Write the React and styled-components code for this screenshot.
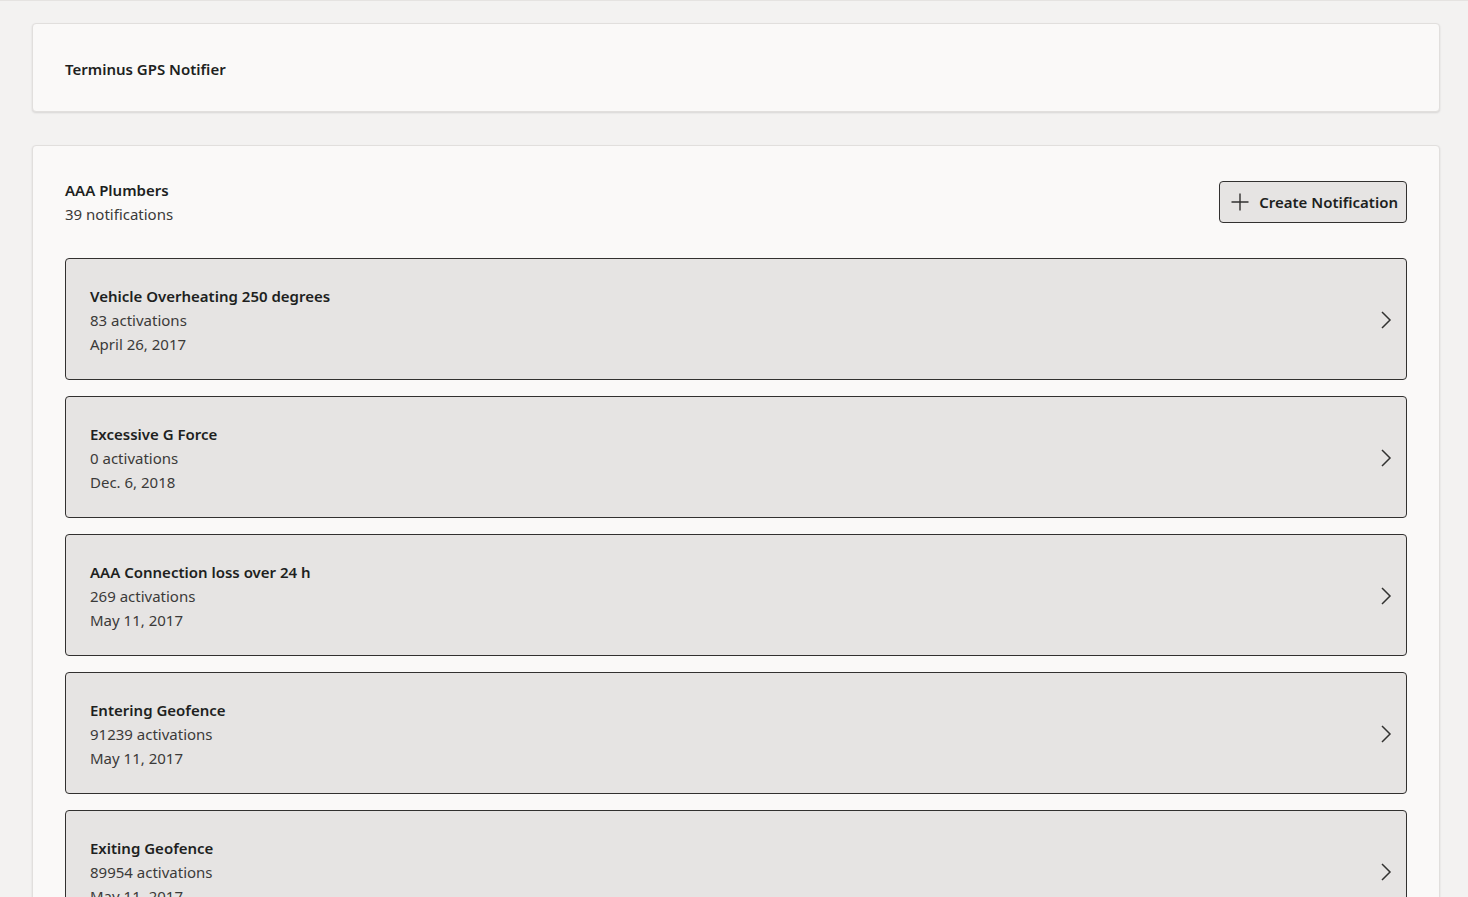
import React from "react";
import styled, { createGlobalStyle } from "styled-components";

const Global = createGlobalStyle`
  html, body { margin: 0; padding: 0; }
  body {
    background: #f3f2f1;
    font-family: "Noto Sans", "Open Sans", sans-serif;
    color: #323130;
    border-top: 1px solid #e5e3e1;
  }
`;

const Page = styled.div`
  display: flex;
  flex-direction: column;
  gap: 33px;
  padding: 22px 28px 0 32px;
`;

const Card = styled.section`
  background: #faf9f8;
  border: 1px solid #e1dfdd;
  border-radius: 4px;
  box-shadow: 0 1px 2px rgba(0, 0, 0, 0.12);
  padding: ${(p) => p.$pad || "32px"};
`;

const AppTitle = styled.h1`
  margin: 0;
  font-size: 15px;
  font-weight: 600;
  line-height: 24px;
  color: #201f1e;
`;

const HeaderRow = styled.div`
  display: flex;
  justify-content: space-between;
  align-items: flex-start;
  margin-bottom: 32px;
`;

const OrgName = styled.h2`
  margin: 0;
  font-size: 15px;
  font-weight: 600;
  line-height: 24px;
  color: #201f1e;
`;

const Sub = styled.div`
  font-size: 15px;
  line-height: 24px;
  color: #3b3a39;
`;

const CreateButton = styled.button`
  display: flex;
  align-items: center;
  gap: 10px;
  height: 42px;
  margin-top: 3px;
  padding: 0 8px 0 11px;
  background: #e6e4e3;
  border: 1px solid #323130;
  border-radius: 4px;
  font-family: inherit;
  font-size: 15px;
  font-weight: 600;
  color: #201f1e;
  cursor: pointer;
`;

const List = styled.div`
  display: flex;
  flex-direction: column;
  gap: 16px;
`;

const Item = styled.div`
  display: flex;
  align-items: center;
  justify-content: space-between;
  background: #e6e4e3;
  border: 1px solid #323130;
  border-radius: 4px;
  padding: 25px 14px 23px 24px;
`;

const ItemTitle = styled.div`
  font-size: 15px;
  font-weight: 600;
  line-height: 24px;
  color: #201f1e;
`;

const ItemLine = styled.div`
  font-size: 15px;
  line-height: 24px;
  color: #3b3a39;
`;

const Plus = () => (
  <svg width="18" height="18" viewBox="0 0 18 18" fill="none">
    <path d="M9 0.5V17.5M0.5 9H17.5" stroke="#323130" strokeWidth="1.4" />
  </svg>
);

const Chevron = () => (
  <svg width="12" height="20" viewBox="0 0 12 20" fill="none">
    <path d="M2 2L10 10L2 18" stroke="#323130" strokeWidth="1.5" />
  </svg>
);

const items = [
  ["Vehicle Overheating 250 degrees", "83 activations", "April 26, 2017"],
  ["Excessive G Force", "0 activations", "Dec. 6, 2018"],
  ["AAA Connection loss over 24 h", "269 activations", "May 11, 2017"],
  ["Entering Geofence", "91239 activations", "May 11, 2017"],
  ["Exiting Geofence", "89954 activations", "May 11, 2017"],
  ["Ignition On", "1203 activations", "May 11, 2017"],
];

export default function App() {
  return (
    <>
      <Global />
      <Page>
        <Card $pad="33px 32px 30px">
          <AppTitle>Terminus GPS Notifier</AppTitle>
        </Card>
        <Card>
          <HeaderRow>
            <div>
              <OrgName>AAA Plumbers</OrgName>
              <Sub>39 notifications</Sub>
            </div>
            <CreateButton>
              <Plus />
              Create Notification
            </CreateButton>
          </HeaderRow>
          <List>
            {items.map(([t, a, d]) => (
              <Item key={t}>
                <div>
                  <ItemTitle>{t}</ItemTitle>
                  <ItemLine>{a}</ItemLine>
                  <ItemLine>{d}</ItemLine>
                </div>
                <Chevron />
              </Item>
            ))}
          </List>
        </Card>
      </Page>
    </>
  );
}
